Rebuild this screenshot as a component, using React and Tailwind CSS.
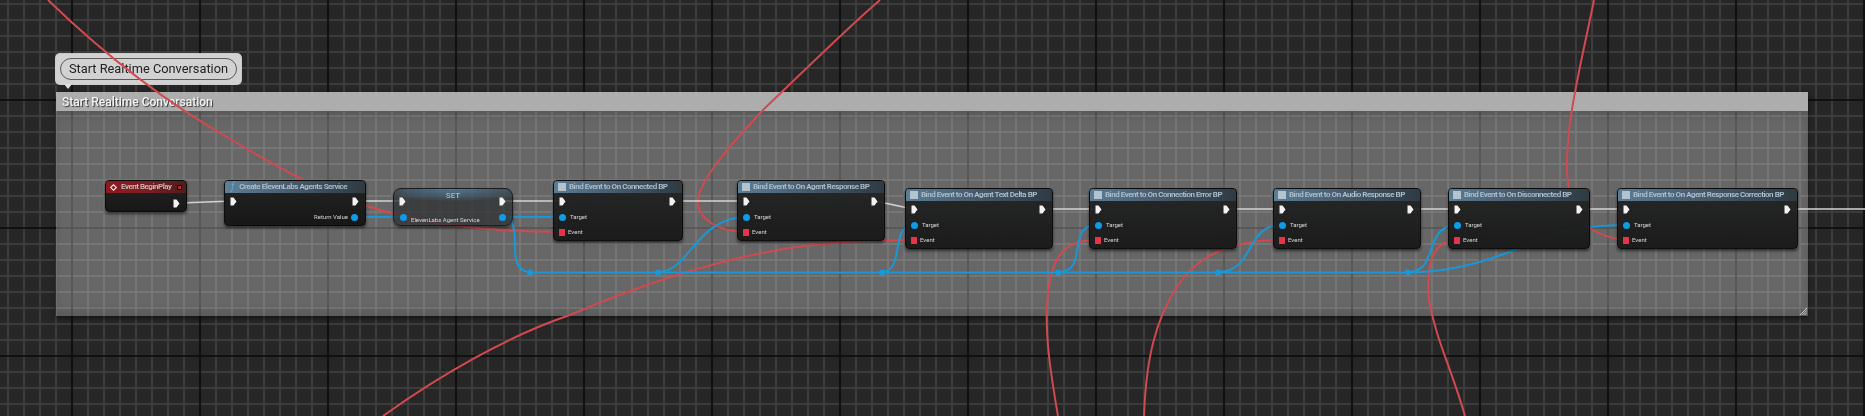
import React from "react";

const redWires = [
  "M48,0 C110,60 170,105 232,140 C290,175 345,205 420,220 C470,229 515,232 562,232",
  "M880,0 C845,30 800,75 763,110 C735,140 700,178 698,200 C697,220 720,232 746,232",
  "M383,416 C440,375 510,335 570,315 C640,285 720,258 797,247 C840,241 880,240 915,240",
  "M1058,416 C1050,370 1042,320 1050,280 C1056,250 1070,240 1097,240",
  "M1144,416 C1146,360 1155,320 1178,285 C1195,260 1225,240 1281,240",
  "M1465,416 C1452,370 1436,340 1429,300 C1426,265 1432,240 1458,240",
  "M1594,0 C1582,60 1566,120 1567,170 C1569,215 1585,236 1626,240",
];

const blueWires = [
  "M355,217 L403,217",
  "M501,217 L562,217",
  "M508,217 C514,222 515,232 515,248 C515,265 520,272 532,272.5 L1410,272.5",
  "M658,272 C690,272 695,218 746,217",
  "M882,272 C905,272 890,225 913,225",
  "M1058,272 C1090,272 1065,225 1097,225",
  "M1218,272 C1255,272 1245,225 1281,225",
  "M1408,272 C1440,272 1422,225 1458,225",
  "M1410,272.5 C1490,272 1540,232 1590,227 C1600,226 1610,225 1626,225",
];

const whiteWires = [
  "M180,203 L233,201",
  "M356,201 L403,201",
  "M502,201 L562,201",
  "M673,201 L746,201",
  "M875,201 L913,209",
  "M1043,209 L1097,209",
  "M1227,209 L1281,209",
  "M1411,209 L1458,209",
  "M1580,209 L1626,209",
  "M1789,209 L1865,209",
];

const knots = [530, 658, 882, 1058, 1218, 1408];

const Wires = () => (
  <svg className="absolute inset-0" width="1865" height="416" fill="none">
    {redWires.map((d) => (
      <path key={d} d={d} stroke="#d04a50" strokeWidth="2" />
    ))}
    {whiteWires.map((d) => (
      <path key={d} d={d} stroke="#d4d4d4" strokeWidth="1.5" />
    ))}
    {blueWires.map((d) => (
      <path key={d} d={d} stroke="#1a97d6" strokeWidth="2" />
    ))}
    {knots.map((x) => (
      <circle key={x} cx={x} cy="272.5" r="3" fill="#1a97d6" />
    ))}
  </svg>
);

const ExecPin = () => (
  <svg width="7" height="9" viewBox="0 0 7 9" className="shrink-0">
    <path d="M0.5 0.5 H3.5 L6.5 4.5 L3.5 8.5 H0.5 Z" fill="#f2f2f2" />
  </svg>
);

const BluePin = () => <span className="block w-[7px] h-[7px] rounded-full bg-[#0f9be6] shrink-0" />;

const FuncIcon = () => (
  <span className="block w-[8px] h-[8px] shrink-0 border-t-2 border-[#a9c6da] bg-[#b8c2ca]" />
);

const PinLabel = ({ children }) => (
  <span className="text-[6px] leading-none whitespace-nowrap text-[#d6d6d6]">{children}</span>
);

const ExecRow = () => (
  <div className="flex justify-between items-center h-[9px] pl-[5px] pr-[6px]">
    <ExecPin />
    <ExecPin />
  </div>
);

const BindNode = ({ title, x, y, w }) => (
  <div
    style={{ left: x, top: y, width: w }}
    className="absolute h-[61px] rounded-[4px] border border-[#0c0c0c] bg-gradient-to-b from-[#232424]/95 to-[#171717]/95 shadow-[0_2px_3px_rgba(0,0,0,0.55)] overflow-hidden"
  >
    <div className="flex items-center gap-[3px] h-[12px] pl-[4px] bg-gradient-to-r from-[#5b7d96] via-[#46596a] to-[#2f3a42]">
      <FuncIcon />
      <span className="text-[8px] font-semibold leading-none whitespace-nowrap tracking-[-0.46px] text-[#adc0cf]">{title}</span>
    </div>
    <div className="mt-[4px]">
      <ExecRow />
    </div>
    <div className="flex items-center gap-[4px] pl-[5px] mt-[7px] h-[8px]">
      <BluePin />
      <PinLabel>Target</PinLabel>
    </div>
    <div className="flex items-center gap-[3px] pl-[5px] mt-[7px] h-[8px]">
      <span className="block w-[6px] h-[7px] bg-[#e8324a] shrink-0" />
      <PinLabel>Event</PinLabel>
    </div>
  </div>
);

const BeginPlay = () => (
  <div className="absolute left-[105px] top-[180px] w-[82px] h-[32px] rounded-[4px] border border-[#0c0c0c] bg-gradient-to-b from-[#232424] to-[#171717] shadow-[0_2px_3px_rgba(0,0,0,0.55)] overflow-hidden">
    <div className="flex items-center h-[12px] pl-[5px] pr-[4px] bg-gradient-to-r from-[#8e1a20] via-[#7c1d22] to-[#4c1d1e]">
      <span className="block w-[5px] h-[5px] rotate-45 border border-white shrink-0" />
      <span className="ml-[5px] text-[8px] font-semibold leading-none whitespace-nowrap tracking-[-0.48px] text-[#c9bdbd]">Event BeginPlay</span>
      <span className="ml-auto block w-[5px] h-[5px] bg-[#c02028] border border-black shrink-0" />
    </div>
    <div className="flex justify-end pr-[6px] mt-[6px]">
      <ExecPin />
    </div>
  </div>
);

const CreateNode = () => (
  <div className="absolute left-[224px] top-[180px] w-[142px] h-[46px] rounded-[4px] border border-[#0c0c0c] bg-gradient-to-b from-[#232424] to-[#171717] shadow-[0_2px_3px_rgba(0,0,0,0.55)] overflow-hidden">
    <div className="flex items-center gap-[5px] h-[12px] pl-[6px] bg-gradient-to-r from-[#5f8099] via-[#46596a] to-[#2f3a42]">
      <span className="text-[10px] italic leading-none text-[#5ea6dc]">ƒ</span>
      <span className="text-[8px] font-semibold leading-none whitespace-nowrap tracking-[-0.46px] text-[#adc0cf]">Create ElevenLabs Agents Service</span>
    </div>
    <div className="mt-[4px]">
      <ExecRow />
    </div>
    <div className="flex justify-end items-center gap-[3px] pr-[7px] mt-[7px] h-[8px]">
      <PinLabel>Return Value</PinLabel>
      <BluePin />
    </div>
  </div>
);

const SetNode = () => (
  <div className="absolute left-[393px] top-[188px] w-[120px] h-[38px] rounded-[8px] border border-[#1c1c1c] bg-[radial-gradient(ellipse_70%_35%_at_50%_0%,rgba(70,125,165,0.75),rgba(48,50,52,0.78))] shadow-[0_2px_3px_rgba(0,0,0,0.5)]">
    <div className="text-center text-[8px] font-medium leading-none mt-[3px] text-[#a9b8c4]">SET</div>
    <div className="-mt-[3px]">
      <ExecRow />
    </div>
    <div className="flex items-center pl-[6px] pr-[6px] mt-[7px] h-[8px]">
      <BluePin />
      <span className="ml-[4px]">
        <PinLabel>ElevenLabs Agent Service</PinLabel>
      </span>
      <span className="ml-auto">
        <BluePin />
      </span>
    </div>
  </div>
);

const CommentBox = () => (
  <>
    <div className="absolute left-[56px] top-[54px] w-[185px] h-[30px] p-[4px] rounded-[4px] bg-[#d2d2d2] shadow-[0_0_0_1px_rgba(255,255,255,0.75)]">
      <div className="flex items-center justify-center h-full rounded-full border border-[#5a5a5a] text-[12.8px] leading-none whitespace-nowrap text-[#222]">
        Start Realtime Conversation
      </div>
      <span className="absolute left-[8px] top-full w-0 h-0 border-x-[4px] border-x-transparent border-t-[5px] border-t-[#e2e2e2]" />
    </div>
    <div className="absolute left-[56px] top-[92px] w-[1752px] h-[224px] bg-[#ffffff]/30 shadow-[0_2px_4px_rgba(0,0,0,0.5),inset_0_-6px_8px_rgba(0,0,0,0.12)]">
      <div className="flex items-center h-[19px] pl-[6px] bg-[#adadad] text-[12px] font-medium leading-none whitespace-nowrap text-[#f4f4f4] shadow-[0_5px_8px_rgba(0,0,0,0.15)] [text-shadow:1px_1px_1px_rgba(0,0,0,0.7)]">
        Start Realtime Conversation
      </div>
      <svg className="absolute right-[1px] bottom-[1px]" width="7" height="7" viewBox="0 0 7 7" stroke="#e8e8e8" strokeWidth="0.8">
        <path d="M0 7 L7 0 M2.3 7 L7 2.3 M4.6 7 L7 4.6" />
      </svg>
    </div>
  </>
);

export default function App() {
  return (
    <div className="relative w-[1865px] h-[416px] overflow-hidden font-['Roboto',sans-serif] bg-[#262626] blur-[0.4px]">
      <div className="absolute inset-0 bg-[repeating-linear-gradient(90deg,transparent_0,transparent_71px,#101010_71px,#101010_73px,transparent_73px,transparent_128px),repeating-linear-gradient(180deg,transparent_0,transparent_99px,#101010_99px,#101010_101px,transparent_101px,transparent_128px),repeating-linear-gradient(90deg,transparent_0,transparent_6.5px,#3c3c3c_7.5px,#3c3c3c_8.5px,transparent_9.5px,transparent_16px),repeating-linear-gradient(180deg,transparent_0,transparent_2.5px,#3c3c3c_3.5px,#3c3c3c_4.5px,transparent_5.5px,transparent_16px)]" />
      <CommentBox />
      <Wires />
      <BeginPlay />
      <CreateNode />
      <SetNode />
      <BindNode title="Bind Event to On Connected BP" x={553} y={180} w={130} />
      <BindNode title="Bind Event to On Agent Response BP" x={737} y={180} w={148} />
      <BindNode title="Bind Event to On Agent Text Delta BP" x={905} y={188} w={148} />
      <BindNode title="Bind Event to On Connection Error BP" x={1089} y={188} w={148} />
      <BindNode title="Bind Event to On Audio Response BP" x={1273} y={188} w={148} />
      <BindNode title="Bind Event to On Disconnected BP" x={1448} y={188} w={142} />
      <BindNode title="Bind Event to On Agent Response Correction BP" x={1617} y={188} w={181} />
    </div>
  );
}
